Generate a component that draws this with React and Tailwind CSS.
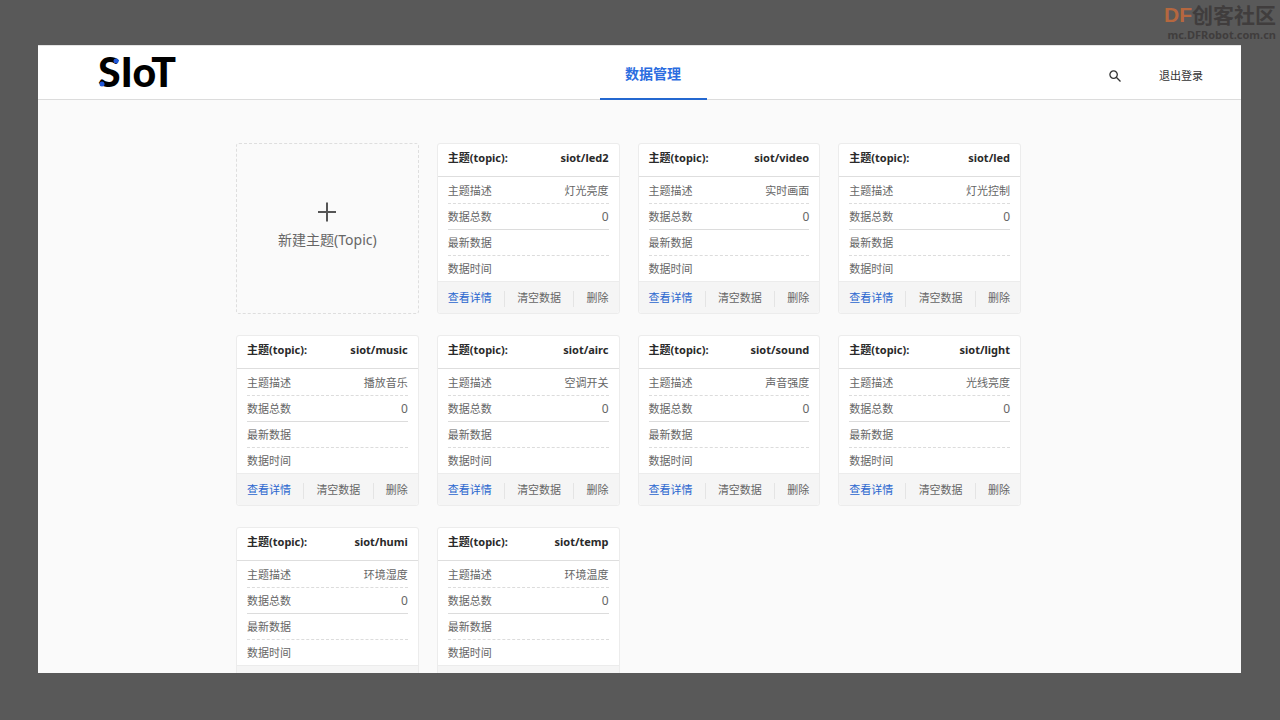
import React from "react";

const topics = [
  { name: "siot/led2", desc: "灯光亮度", count: 0 },
  { name: "siot/video", desc: "实时画面", count: 0 },
  { name: "siot/led", desc: "灯光控制", count: 0 },
  { name: "siot/music", desc: "播放音乐", count: 0 },
  { name: "siot/airc", desc: "空调开关", count: 0 },
  { name: "siot/sound", desc: "声音强度", count: 0 },
  { name: "siot/light", desc: "光线亮度", count: 0 },
  { name: "siot/humi", desc: "环境湿度", count: 0 },
  { name: "siot/temp", desc: "环境温度", count: 0 },
];

function Logo() {
  return (
    <a href="#home" aria-label="SIoT" className="block">
      <svg width="84" height="52" viewBox="0 0 84 52">
        <text
          x="0"
          y="40"
          fontSize="41"
          fontFamily="Lato, sans-serif"
          fontWeight="900"
        >
          SIoT
        </text>
        <circle cx="18" cy="14" r="2.5" fill="#1f56d8" />
        <circle cx="4" cy="37" r="2.5" fill="#1f56d8" />
      </svg>
    </a>
  );
}

function Header() {
  return (
    <header className="flex h-[55px] shrink-0 border-t border-b border-t-[#e4e4e4] border-b-[#dcdcdc] bg-white">
      <div className="flex flex-1 items-center pl-[60px]">
        <Logo />
      </div>
      <nav className="flex pl-[5px]">
        <a
          href="#data"
          className="-mb-px flex w-[107px] items-center justify-center border-b-2 border-[#2468d0] pt-1 text-sm font-bold text-[#2b6de0]"
        >
          数据管理
        </a>
      </nav>
      <div className="flex flex-1 items-center justify-end gap-[38px] pt-[7px] pr-[38px]">
        <button type="button" aria-label="搜索">
          <svg
            width="12"
            height="12"
            viewBox="0 0 12 12"
            fill="none"
            stroke="#333"
            strokeWidth="1.3"
          >
            <circle cx="4.6" cy="4.6" r="3.7" />
            <path d="M7.3 7.3 11.5 11.5" />
          </svg>
        </button>
        <button type="button" className="text-[11px] text-[#333]">
          退出登录
        </button>
      </div>
    </header>
  );
}

function Row({ label, value, line }) {
  return (
    <div
      className={`flex h-[26px] items-center justify-between pt-0.5 last:h-[25px] ${line}`}
    >
      <dt>{label}</dt>
      <dd>{value}</dd>
    </div>
  );
}

function TopicCard({ topic }) {
  return (
    <article className="flex h-[171px] flex-col rounded-[3px] border border-[#ececec] bg-white text-[11px] text-[#666]">
      <h2 className="flex h-[33px] items-center justify-between border-b border-[#dedede] px-2.5 pb-[3px] font-bold text-[#2a2a2a]">
        <span>主题(topic):</span>
        <span>{topic.name}</span>
      </h2>
      <dl className="flex-1 px-2.5 pt-px">
        <Row
          label="主题描述"
          value={topic.desc}
          line="border-b border-dashed border-[#dcdcdc]"
        />
        <Row
          label="数据总数"
          value={<span className="text-xs">{topic.count}</span>}
          line="border-b border-[#dcdcdc]"
        />
        <Row
          label="最新数据"
          line="border-b border-dashed border-[#dcdcdc]"
        />
        <Row label="数据时间" line="border-0" />
      </dl>
      <div className="flex h-8 items-center justify-between rounded-b-[3px] border-t border-[#ececec] bg-[#f5f5f5] px-2.5 pt-0.5">
        <button type="button" className="text-[#2a66cf]">
          查看详情
        </button>
        <span className="h-4 w-px bg-[#e4e4e4]" />
        <button type="button">清空数据</button>
        <span className="h-4 w-px bg-[#e4e4e4]" />
        <button type="button">删除</button>
      </div>
    </article>
  );
}

function NewTopic() {
  return (
    <button
      type="button"
      className="flex h-[171px] flex-col items-center justify-center gap-2 rounded-[3px] border border-dashed border-[#dedede] pb-1.5 text-sm text-[#666]"
    >
      <svg width="20" height="20" viewBox="0 0 20 20" stroke="#555" strokeWidth="2">
        <path d="M10 0.5V19.5M1 10H19" />
      </svg>
      新建主题(Topic)
    </button>
  );
}

export default function App() {
  return (
    <div className="relative h-screen bg-[#595959] pt-[45px] pr-[39px] pb-[47px] pl-[38px] font-['Noto_Sans','Noto_Sans_CJK_SC',sans-serif]">
      <div className="absolute top-[3px] right-1 flex flex-col items-end font-bold text-[#403d3d]">
        <div className="flex text-[21px] leading-6">
          <span className="font-['Liberation_Sans',sans-serif] text-[#b5673f]">DF</span>
          <span>创客社区</span>
        </div>
        <div className="text-[11px] leading-4">mc.DFRobot.com.cn</div>
      </div>
      <div className="flex h-full flex-col bg-[#fafafa]">
        <Header />
        <main className="grid min-h-0 flex-1 grid-cols-4 content-start gap-x-[18px] gap-y-[21px] overflow-y-auto pt-[43px] pr-[220px] pl-[198px] [scrollbar-width:none]">
          <NewTopic />
          {topics.map((topic) => (
            <TopicCard key={topic.name} topic={topic} />
          ))}
        </main>
      </div>
    </div>
  );
}
